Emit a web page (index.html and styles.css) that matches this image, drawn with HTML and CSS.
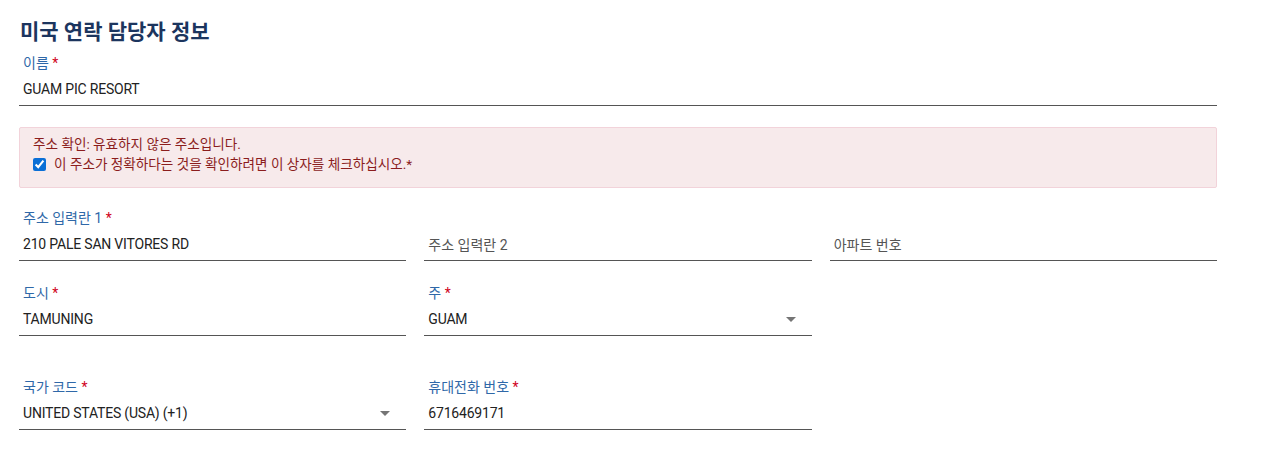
FILE: index.html
```html
<!DOCTYPE html>
<html lang="ko">
<head>
<meta charset="UTF-8">
<meta name="viewport" content="width=device-width, initial-scale=1.0">
<title>미국 연락 담당자 정보</title>
<link rel="stylesheet" href="styles.css">
</head>
<body>
<div class="container">
  <h1>미국 연락 담당자 정보</h1>

  <div class="field name-field">
    <label>이름 <span class="req">*</span></label>
    <div class="input">GUAM PIC RESORT</div>
  </div>

  <div class="alert">
    <p>주소 확인: 유효하지 않은 주소입니다.</p>
    <label class="confirm">
      <input type="checkbox" checked>
      <span>이 주소가 정확하다는 것을 확인하려면 이 상자를 체크하십시오.*</span>
    </label>
  </div>

  <!-- 주소 -->
  <div class="row">
    <div class="field">
      <label>주소 입력란 1 <span class="req">*</span></label>
      <div class="input">210 PALE SAN VITORES RD</div>
    </div>
    <div class="field">
      <label>&nbsp;</label>
      <div class="input placeholder">주소 입력란 2</div>
    </div>
    <div class="field">
      <label>&nbsp;</label>
      <div class="input placeholder">아파트 번호</div>
    </div>
  </div>

  <div class="row">
    <div class="field">
      <label>도시 <span class="req">*</span></label>
      <div class="input">TAMUNING</div>
    </div>
    <div class="field">
      <label>주 <span class="req">*</span></label>
      <div class="input select">GUAM<span class="arrow"></span></div>
    </div>
  </div>

  <!-- 연락처 -->
  <div class="row last">
    <div class="field">
      <label>국가 코드 <span class="req">*</span></label>
      <div class="input select">UNITED STATES (USA) (+1)<span class="arrow"></span></div>
    </div>
    <div class="field">
      <label>휴대전화 번호 <span class="req">*</span></label>
      <div class="input">6716469171</div>
    </div>
  </div>
</div>
</body>
</html>
```

FILE: styles.css
```css
body {
  margin: 0;
  background-color: #fff;
  font-family: Roboto, "Noto Sans CJK KR", sans-serif;
  font-size: 14px;
  color: #222;
}
.container {
  width: 1198px;
  margin-left: 19px;
  padding-top: 20px;
}
h1 {
  margin: 0 0 10px 1px;
  font-size: 21px;
  line-height: 24px;
  font-weight: bold;
  color: #1c355e;
}
.field label {
  display: block;
  padding-left: 4px;
  line-height: 18px;
  color: #2f68a8;
}
.req {
  color: #d0021b;
}
.input {
  position: relative;
  box-sizing: border-box;
  height: 34px;
  padding: 1px 0 1px 4px;
  display: flex;
  align-items: center;
  border-bottom: 1px solid #555;
  color: #222;
  letter-spacing: -0.2px;
}
.name-field .input {
  padding: 1px 0 0 4px;
}
.placeholder {
  color: #555;
  letter-spacing: 0;
}
.arrow {
  position: absolute;
  right: 16px;
  top: 15px;
  width: 0;
  height: 0;
  border-left: 5px solid transparent;
  border-right: 5px solid transparent;
  border-top: 5px solid #757575;
}
.alert {
  margin-top: 21px;
  height: 61px;
  box-sizing: border-box;
  padding: 6px 13px 0;
  background-color: #f7eaeb;
  border: 1px solid #f2d3da;
  border-radius: 2px;
  font-size: 13.6px;
  color: #8b1d1d;
}
.alert p {
  margin: 0;
  line-height: 20px;
}
.confirm {
  display: flex;
  align-items: center;
  line-height: 20px;
}
.confirm input {
  width: 13px;
  height: 13px;
  margin: 0 8px 0 0;
  accent-color: #0b6fd6;
}
.row {
  display: grid;
  grid-template-columns: repeat(3, 1fr);
  column-gap: 18px;
  margin-top: 21px;
}
.row + .row {
  margin-top: 23px;
}
.row.last {
  margin-top: 42px;
}
```
